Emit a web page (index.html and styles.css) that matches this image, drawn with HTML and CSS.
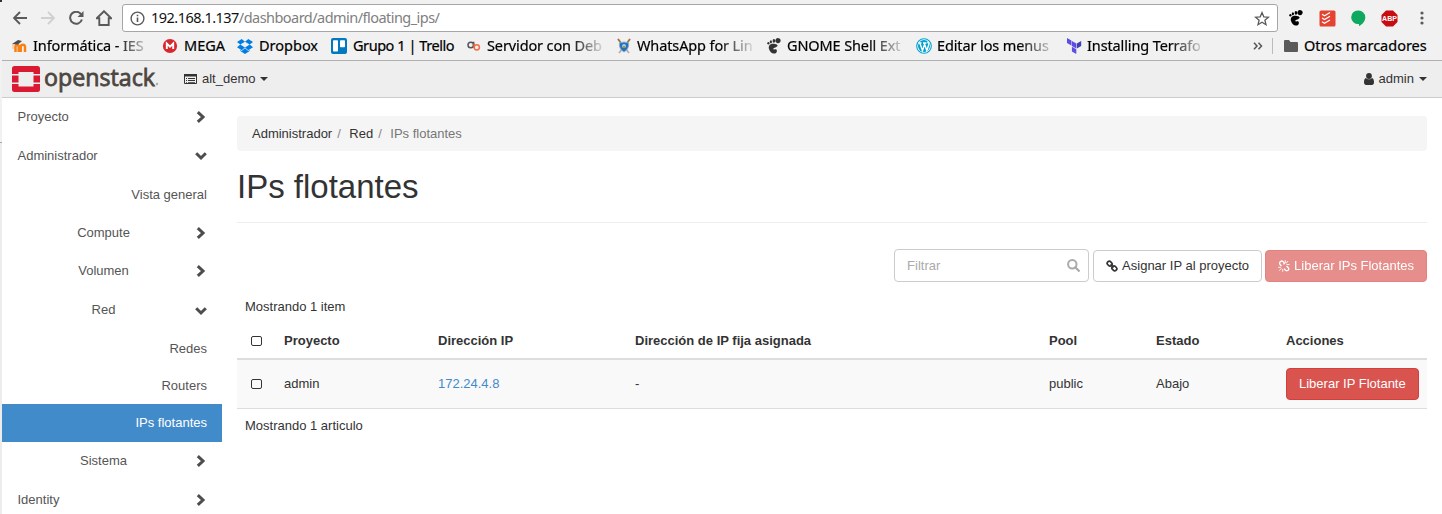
FILE: index.html
```html
<!DOCTYPE html>
<html lang="es">
<head>
<meta charset="utf-8">
<title>IPs flotantes - OpenStack Dashboard</title>
<link rel="stylesheet" href="styles.css">
</head>
<body>
<svg class="defs" width="0" height="0">
  <defs>
    <symbol id="right" viewBox="0 0 10 12"><path d="M1.8 1.2 7 6 1.8 10.8" fill="none" stroke="currentColor" stroke-width="3"/></symbol>
    <symbol id="down" viewBox="0 0 12 10"><path d="M1.2 2.2 6 7 10.8 2.2" fill="none" stroke="currentColor" stroke-width="3"/></symbol>
    <symbol id="foot" viewBox="0 0 16 16"><path d="M9 6C4.500 5 2 7.500 3 11c.8 2.800 2.800 4.800 5.300 4.600 2.200-.2 3.200-2.500 2.200-3.900-1-1-2 .3-3-.4-.8-1 .8-1.600 2.400-2.100C12.500 8.200 12 6.300 9 6Z"/><ellipse cx="12" cy="2.700" rx="2.600" ry="2.500" transform="rotate(20 12 2.700)"/><ellipse cx="7.900" cy="2.900" rx="1.300" ry="1.800"/><ellipse cx="4.900" cy="3.800" rx="1.100" ry="1.500"/><ellipse cx="2.400" cy="5.200" rx="1.100" ry="1.300"/></symbol>
  </defs>
</svg>
<div class="window">
  <div class="edge"><span class="edge-top"></span><span class="edge-rest"></span></div>
  <div class="screen">
    <div class="toolbar">
      <svg class="nav" width="14" height="14" viewBox="0 0 14 14"><path d="M14 7H1.500M7 1 1 7l6 6" fill="none" stroke="#5a5a5a" stroke-width="1.900"/></svg>
      <svg class="nav" width="14" height="14" viewBox="0 0 14 14"><path d="M0 7h12.500M7 1l6 6-6 6" fill="none" stroke="#d0d0d0" stroke-width="1.900"/></svg>
      <svg class="nav" width="15" height="14" viewBox="0 0 15 14"><path d="M12 3.200A6 6 0 1 0 12.900 8.500" fill="none" stroke="#5a5a5a" stroke-width="2"/><path d="M14.500 0v6H8.500Z" fill="#5a5a5a"/></svg>
      <svg class="nav" width="16" height="16" viewBox="0 0 16 16"><path d="M.8 8.200 8 1.200l7.200 7H12.700V15H3.300V8.200Z" fill="none" stroke="#5a5a5a" stroke-width="1.900"/></svg>
      <div class="address">
        <svg width="15" height="15" viewBox="0 0 15 15"><circle cx="7.500" cy="7.500" r="6.400" fill="none" stroke="#5a5a5a" stroke-width="1.400"/><path d="M6.700 6.500h1.600V11H6.700zM6.700 3.700h1.600v1.600H6.700z" fill="#5a5a5a"/></svg>
        <span class="url"><span class="host">192.168.1.137</span><span class="path">/dashboard/admin/floating_ips/</span></span>
        <svg width="16" height="15" viewBox="0 0 16 15"><path d="m8 1.600 1.800 4.200 4.600.4-3.500 3 1.100 4.500L8 11.300l-4 2.400 1.100-4.500-3.500-3 4.600-.4Z" fill="none" stroke="#5a5a5a" stroke-width="1.300"/></svg>
      </div>
      <div class="extensions">
        <svg width="16" height="16"><use href="#foot"/></svg>
        <svg width="17" height="17" viewBox="0 0 17 17"><rect x=".5" y=".5" width="16" height="16" rx="1.500" fill="#e44332"/><path d="m3 4.200 2.500 1.500L11 2.500M3 8l2.500 1.500L11 6.300M3 11.800l2.500 1.500L11 10" fill="none" stroke="#fff" stroke-width="1.200"/></svg>
        <svg width="15" height="17" viewBox="0 0 15 17"><path d="M7.500.5a6.800 6.800 0 0 1 6.800 6.700c0 4-3 7.300-6.300 8.800V14A6.800 6.800 0 1 1 7.500.5Z" fill="#0da960"/></svg>
        <svg width="17" height="17" viewBox="0 0 17 17"><path d="M5 .5h7L16.500 5v7L12 16.500H5L.5 12V5Z" fill="#c70d12"/><text x="8.500" y="11.300" text-anchor="middle" class="abp">ABP</text></svg>
        <svg class="menu" width="4" height="14" viewBox="0 0 4 14" fill="#5a5a5a"><circle cx="2" cy="2" r="1.600"/><circle cx="2" cy="7" r="1.600"/><circle cx="2" cy="12" r="1.600"/></svg>
      </div>
    </div>
    <div class="bookmarks">
      <div class="bm"><svg width="16" height="16" viewBox="0 0 16 16"><path d="M3.500 14V9c0-3 3.200-3 3.200 0v5M8.700 14V9c0-3 4.300-3 4.300 0v5" fill="none" stroke="#f98012" stroke-width="2.500"/><path d="m0 6 6-4 4 1-4 3.500Z" fill="#4d4d4d"/><path d="M1 6v5" stroke="#f9b478" stroke-width="1"/></svg><span class="fade">Informática - IES</span></div>
      <div class="bm mega"><svg width="16" height="16" viewBox="0 0 16 16"><circle cx="8" cy="8" r="7.100" fill="#d9272e"/><path d="M4.800 11V5.500L8 8.700l3.200-3.200V11" fill="none" stroke="#fff" stroke-width="1.900"/></svg><span>MEGA</span></div>
      <div class="bm dropbox"><svg width="16" height="16" viewBox="0 0 16 16" fill="#007ee5"><path d="M4.700 1 8 3.700 3.300 6.600 0 4ZM11.300 1 16 4l-3.300 2.600L8 3.700ZM0 9.200l3.300-2.600L8 9.500l-3.300 2.700ZM16 9.200l-3.300-2.600L8 9.500l3.300 2.700ZM8 10.200l3.300 2.700 1.400-.8v1L8 16l-4.700-2.900v-1l1.400.8Z"/></svg><span>Dropbox</span></div>
      <div class="bm trello"><svg width="16" height="16" viewBox="0 0 16 16"><rect width="16" height="16" rx="2" fill="#0079bf"/><rect x="2" y="2.200" width="5" height="11.300" rx=".8" fill="#fff"/><rect x="9" y="2.200" width="5" height="7" rx=".8" fill="#fff"/></svg><span>Grupo 1 | Trello</span></div>
      <div class="bm"><svg width="16" height="16" viewBox="0 0 16 16" fill="none" stroke-width="1.500"><circle cx="4.800" cy="7" r="2.800" stroke="#555"/><path d="M7.600 3.700V9.500" stroke="#555"/><circle cx="10.800" cy="9.300" r="2.600" stroke="#f26b43"/><path d="M8.200 5.500v4" stroke="#f26b43"/></svg><span class="fade">Servidor con Deb</span></div>
      <div class="bm"><svg width="16" height="16" viewBox="0 0 16 16"><path d="m2 1 11 14M14 1 3 15" stroke="#aaa" stroke-width="1.500"/><path d="m2 1 3 4M14 1l-3 4" stroke="#9b7746" stroke-width="1.700"/><path d="m3.500 5 4.500-1 4.500 1c.5 4-1 7-4.500 9-3.500-2-5-5-4.500-9Z" fill="#2470b9" stroke="#8baaca"/><circle cx="8" cy="8" r="2" fill="#9bd0f1"/><path d="M7 8h2v2H7z" fill="#bd8c3d"/></svg><span class="fade">WhatsApp for Lin</span></div>
      <div class="bm gnome"><svg width="16" height="16"><use href="#foot"/></svg><span class="fade">GNOME Shell Ext</span></div>
      <div class="bm"><svg width="16" height="16" viewBox="0 0 16 16"><circle cx="8" cy="8" r="7.300" fill="#fff" stroke="#00a0d2" stroke-width="1.100"/><circle cx="8" cy="8" r="6" fill="#00a0d2"/><path d="M2.500 5h3M7 5h3.500M3.800 5 6.500 12.500 8.500 6.500M8.200 5l2.600 7.500L12.700 7c.5-2-1-2-1-3.500" fill="none" stroke="#fff" stroke-width="1.400"/></svg><span class="fade">Editar los menus</span></div>
      <div class="bm"><svg width="16" height="16" viewBox="0 0 16 16"><path d="m1 0 4.400 2.600v5L1 5ZM5.900 3l4.400 2.600v5L5.900 8ZM5.900 8.700l4.400 2.600V16l-4.400-2.500Z" fill="#5c4ee5"/><path d="M10.800 5.600 15.200 3v5l-4.400 2.600Z" fill="#4040b2"/></svg><span class="fade">Installing Terrafo</span></div>
      <div class="others"><svg width="10" height="8" viewBox="0 0 10 8"><path d="m1 .8 3 3.200-3 3.200M5.500.8l3 3.200-3 3.200" fill="none" stroke="#555" stroke-width="1.500"/></svg><i></i><svg width="14" height="12" viewBox="0 0 14 12"><path d="M0 1Q0 0 1 0h4l1.500 2H13q1 0 1 1v8q0 1-1 1H1q-1 0-1-1Z" fill="#5a5a5a"/></svg><span>Otros marcadores</span></div>
    </div>
    <header class="topbar">
      <svg width="150" height="30" viewBox="0 0 150 30"><path d="M2.500 0h23Q28 0 28 2.500V8h-6.500V6h-15v2H0V2.500Q0 0 2.500 0ZM0 18h6.500v2.500h15V18H28v5.500q0 2.500-2.500 2.500h-23Q0 26 0 23.500ZM0 9.500h6.500v7H0zM21.500 9.500H28v7h-6.500z" fill="#da1a32"/><text class="wordmark" x="32" y="19.500" textLength="111" lengthAdjust="spacingAndGlyphs">openstack</text><circle cx="145" cy="18" r="1.200" fill="#aaa"/></svg>
      <div class="project"><svg width="13" height="10" viewBox="0 0 13 10"><path d="M.5 1h12v8.500H.5Z" fill="none" stroke="#333"/><path d="M0 0h13v2.500H0zM2 4h1v1H2zm2 0h7v1H4zM2 6h1v1H2zm2 0h7v1H4zM2 8h1v.7H2zm2 0h7v.7H4z" fill="#333"/></svg><span>alt_demo</span><b class="caret"></b></div>
      <div class="user"><svg width="10" height="12" viewBox="0 0 10 12" fill="#333"><circle cx="5" cy="3" r="2.900"/><path d="M2 5c1 1.800 5 1.800 6 0 1.500.2 2 2 2 4.500C10 11 9 12 8 12H2c-1 0-2-1-2-2.500C0 7 .5 5.200 2 5Z"/></svg><span>admin</span><b class="caret"></b></div>
    </header>
    <div class="body">
      <nav class="sidebar">
        <div class="item top h38"><span>Proyecto</span><svg class="cr"><use href="#right"/></svg></div>
        <div class="item top"><span>Administrador</span><svg class="cd"><use href="#down"/></svg></div>
        <div class="item leaf"><span>Vista general</span></div>
        <div class="item group h38"><span>Compute</span><svg class="cr"><use href="#right"/></svg></div>
        <div class="item group h38"><span>Volumen</span><svg class="cr"><use href="#right"/></svg></div>
        <div class="item group"><span>Red</span><svg class="cd low"><use href="#down"/></svg></div>
        <div class="item leaf h39"><span>Redes</span></div>
        <div class="item leaf h36"><span>Routers</span></div>
        <div class="item leaf h38 active"><span>IPs flotantes</span></div>
        <div class="item group h38"><span>Sistema</span><svg class="cr"><use href="#right"/></svg></div>
        <div class="item top"><span>Identity</span><svg class="cr"><use href="#right"/></svg></div>
      </nav>
      <main class="content">
        <div class="crumbs"><a>Administrador</a><i>/</i><a>Red</a><i>/</i><span>IPs flotantes</span></div>
        <h1>IPs flotantes</h1>
        <div class="actions">
          <div class="filter"><span>Filtrar</span><svg width="13" height="13" viewBox="0 0 13 13"><circle cx="5.300" cy="5.300" r="4.200" fill="none" stroke="#aaa" stroke-width="2"/><path d="m8.300 8.300 3.500 3.500" stroke="#aaa" stroke-width="2.300" stroke-linecap="round"/></svg></div>
          <div class="btn"><svg width="12" height="12" viewBox="0 0 12 12" fill="none" stroke="#333" stroke-width="1.700"><rect x="-2.300" y="-2" width="5" height="4" rx="1.700" transform="translate(3.500 3.500) rotate(45)"/><rect x="-2.700" y="-2" width="5" height="4" rx="1.700" transform="translate(8.500 8.500) rotate(45)"/><path d="m4.500 4.500 3 3"/></svg><span>Asignar IP al proyecto</span></div>
          <div class="btn danger disabled"><svg width="12" height="12" viewBox="0 0 12 12" fill="none" stroke="#fff" stroke-width="1.300"><path d="M5.500 4.300 6.500 3 5 1.500Q3.500.5 2.300 1.700 1 3 2 4.500L3.500 6M8.500 6l1.800 1.700q1 1.300-.2 2.500-1.300 1-2.600 0L6 8.600"/><path d="M8 3.500 10 1M8.500 4.500h3M7.300 3V.2M3.500 8.300 1.300 10.700M3 7.300H.2M4.700 9v2.800" stroke-width=".9"/></svg><span>Liberar IPs Flotantes</span></div>
        </div>
        <div class="count">Mostrando 1 item</div>
        <div class="row head"><i class="check"></i><span>Proyecto</span><span>Dirección IP</span><span>Dirección de IP fija asignada</span><span>Pool</span><span>Estado</span><span>Acciones</span></div>
        <div class="row data"><i class="check"></i><span>admin</span><a>172.24.4.8</a><span>-</span><span>public</span><span>Abajo</span><div class="btn danger">Liberar IP Flotante</div></div>
        <div class="count foot">Mostrando 1 articulo</div>
      </main>
    </div>
  </div>
</div>
</body>
</html>
```
FILE: styles.css
```css
* { box-sizing: border-box; }
body { margin: 0; background: #fff; font: 13px/18px "Liberation Sans", Arial, sans-serif; color: #333; }
svg { display: block; flex: none; }
i { font-style: normal; }
.defs { position: absolute; }
.window { display: flex; width: 1442px; height: 514px; overflow: hidden; }
.edge { width: 2px; flex: none; background: #ececec; display: flex; flex-direction: column; }
.edge-top { height: 143px; border-top: 2px solid #333; border-bottom: 1px solid #aaa; background: #f1f1f1; }
.screen { width: 1440px; flex: none; }
.toolbar { height: 32px; padding: 4px 0 0 11px; background: #f1f1f1; display: flex; align-items: center; }
.nav { margin-right: 14px; }
.nav:nth-child(4) { margin-right: 10px; margin-left: -2px; }
.address { width: 1156px; height: 28px; border: 1px solid #a6a6a6; border-radius: 3px; background: #fff; display: flex; align-items: center; padding: 0 7px; }
.url { flex: 1; padding: 0 0 1px 6px; font: 14.5px/23px "Noto Sans", sans-serif; white-space: nowrap; }
.host { color: #111; letter-spacing: -.52px; }
.path { color: #808080; letter-spacing: -.54px; }
.extensions { display: flex; align-items: center; gap: 15px; margin-left: 10px; }
.menu { margin-left: 7px; }
.abp { font: bold 7px "Liberation Sans", sans-serif; fill: #fff; }
.bookmarks { height: 29px; background: #f1f1f1; border-bottom: 1px solid #b0b0b0; padding: 0 14px 1px 10px; display: grid; grid-template-columns: 150px 75px 94px 135px 150px 150px 150px 150px 150px 1fr; align-items: center; font: 14.5px/22px "Noto Sans", sans-serif; color: #000; white-space: nowrap; }
.bookmarks span { padding-bottom: 2px; -webkit-text-stroke: .2px currentColor; }
.bm { display: flex; align-items: center; gap: 5px; min-width: 0; }
.bm.mega, .bm.dropbox { gap: 6px; }
.bm.trello { letter-spacing: -.45px; }
.bm.trello svg { margin-right: 1px; }
.bm.gnome svg { fill: #333; }
.fade { letter-spacing: -.12px; width: 122px; -webkit-mask-image: linear-gradient(90deg, #000 68%, transparent 98%); mask-image: linear-gradient(90deg, #000 68%, transparent 98%); }
.others { display: flex; align-items: center; justify-content: flex-end; }
.others i { width: 1px; height: 16px; background: #bbb; margin: 0 11px 0 9px; }
.others span { margin-left: 6px; width: 124px; }
.topbar { height: 37px; background: #eee; border-bottom: 1px solid #ccc; padding: 5px 15px 0 10px; display: flex; }
.wordmark { font: 24px "Open Sans", sans-serif; fill: #4d4640; stroke: #4d4640; stroke-width: .8px; }
.project, .user { display: flex; align-items: center; height: 25px; }
.project { margin-left: 22px; gap: 5px; }
.user { margin-left: auto; gap: 5px; }
.caret { border: 4px solid transparent; border-top-color: #333; border-bottom: 0; }
.body { display: flex; }
.sidebar { width: 220px; flex: none; height: 416px; overflow: hidden; color: #555; }
.item { height: 39px; display: flex; align-items: center; padding: 0 15px; }
.top { padding-left: 15.5px; }
.item svg { color: #4d4d4d; margin-left: auto; }
.h38 { height: 38px; }
.h39 { height: 39px; padding-top: 1px; }
.h36 { height: 36px; }
.cr { width: 10px; height: 12px; margin-right: 1.5px; }
.cd { width: 12px; height: 10px; margin-right: .5px; }
.low { margin-top: 2px; }
.leaf { justify-content: flex-end; }
.group span { width: 173px; text-align: center; margin-right: -10px; }
.active { background: #428bca; color: #fff; }
.content { padding: 18px 15px 0; width: 1220px; }
.crumbs { height: 35px; background: #f5f5f5; border-radius: 4px; padding: 9px 15px 0; display: flex; color: #777; }
.crumbs a { color: #333; }
.crumbs i { padding: 0 8.500px 0 5px; color: #888; }
h1 { margin: 16px 0 0; height: 56px; font: 33px/39px "Liberation Sans", Arial, sans-serif; border-bottom: 1px solid #eee; }
.actions { display: flex; justify-content: flex-end; gap: 4px; align-items: flex-end; height: 59px; }
.filter { width: 195px; height: 33px; border: 1px solid #ccc; border-radius: 4px; padding: 0 8px 0 12px; display: flex; align-items: center; justify-content: space-between; color: #aaa; }
.btn { height: 32px; border: 1px solid #ccc; border-radius: 4px; display: flex; align-items: center; padding: 0 12px; gap: 4px; white-space: nowrap; background: #fff; }
.danger { background: #d9534f; border-color: #d43f3a; color: #fff; }
.disabled { opacity: .65; margin-left: -1px; }
.count { padding: 16px 8px 0; height: 43px; }
.row { display: grid; grid-template-columns: 39px 154px 197px 414px 107px 130px 1fr; align-items: center; padding-left: 8px; }
.head { height: 35px; font-weight: bold; border-bottom: 2px solid #ddd; padding-bottom: 2px; }
.data { height: 49px; background: #f9f9f9; border-bottom: 1px solid #ddd; padding-right: 8px; }
.data a { color: #428bca; }
.check { width: 11px; height: 10px; border: 1px solid #333; border-radius: 2px; margin-left: 6px; }
.foot { padding-top: 8px; }
```
